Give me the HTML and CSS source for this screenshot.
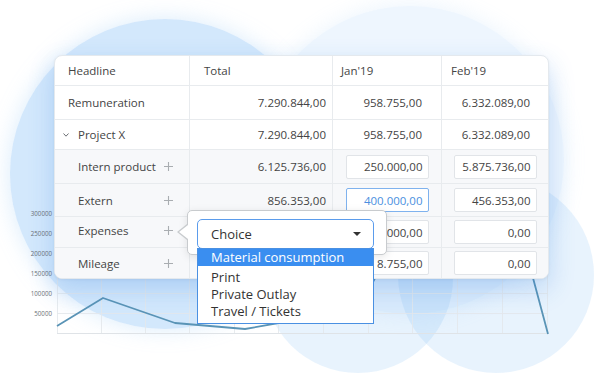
FILE: index.html
```html
<!DOCTYPE html>
<html lang="en">
<head>
  <meta charset="UTF-8">
  <meta name="viewport" content="width=device-width, initial-scale=1.0">
  <title>Budget Sheet</title>
  <link rel="stylesheet" href="styles.css">
</head>
<body>
  <div class="stage">
    <div class="blob blob-a"></div>
    <div class="blob blob-b"></div>
    <div class="blob blob-c"></div>
    <div class="blob blob-d"></div>

    <svg class="chart" width="600" height="140" viewBox="0 200 600 140">
      <g class="grid">
        <line x1="57" y1="213.5" x2="548" y2="213.5"/>
        <line x1="57" y1="233.5" x2="548" y2="233.5"/>
        <line x1="57" y1="253.5" x2="548" y2="253.5"/>
        <line x1="57" y1="273.5" x2="548" y2="273.5"/>
        <line x1="57" y1="293.5" x2="548" y2="293.5"/>
        <line x1="57" y1="313.5" x2="548" y2="313.5"/>
        <line x1="57.5" y1="213" x2="57.5" y2="334"/>
        <line x1="101.5" y1="213" x2="101.5" y2="334"/>
        <line x1="145.5" y1="213" x2="145.5" y2="334"/>
        <line x1="189.5" y1="213" x2="189.5" y2="334"/>
        <line x1="234.5" y1="213" x2="234.5" y2="334"/>
        <line x1="278.5" y1="213" x2="278.5" y2="334"/>
        <line x1="323.5" y1="213" x2="323.5" y2="334"/>
        <line x1="368.5" y1="213" x2="368.5" y2="334"/>
        <line x1="412.5" y1="213" x2="412.5" y2="334"/>
        <line x1="457.5" y1="213" x2="457.5" y2="334"/>
        <line x1="502.5" y1="213" x2="502.5" y2="334"/>
        <line x1="547.5" y1="213" x2="547.5" y2="334"/>
      </g>
      <line class="axis" x1="57" y1="333.5" x2="548" y2="333.5"/>
      <g class="ticks">
        <text x="52" y="215.5">300000</text>
        <text x="52" y="235.5">250000</text>
        <text x="52" y="255.5">200000</text>
        <text x="52" y="275.5">150000</text>
        <text x="52" y="295.5">100000</text>
        <text x="52" y="315.5">50000</text>
      </g>
      <polyline class="trend" points="57,326 103,298 175,323 245,329 290,321 373,282 400,230 510,192 548,334"/>
    </svg>

    <div class="sheet">
      <div class="row head">
        <div class="cell label">Headline</div>
        <div class="cell">Total</div>
        <div class="cell">Jan'19</div>
        <div class="cell">Feb'19</div>
      </div>
      <div class="row tall">
        <div class="cell label">Remuneration</div>
        <div class="cell num total">7.290.844,00</div>
        <div class="cell num jan">958.755,00</div>
        <div class="cell num feb">6.332.089,00</div>
      </div>
      <div class="row">
        <div class="cell label group">
          <svg class="chevron" width="6" height="4" viewBox="0 0 6 4"><polyline points="0.5,0.5 3,3.2 5.5,0.5"/></svg>
          Project X
        </div>
        <div class="cell num total">7.290.844,00</div>
        <div class="cell num jan">958.755,00</div>
        <div class="cell num feb">6.332.089,00</div>
      </div>
      <div class="row sub tall">
        <div class="cell label indent">Intern product <svg class="plus" width="9" height="9" viewBox="0 0 9 9"><path d="M4.5 0v9M0 4.5h9"/></svg></div>
        <div class="cell num total">6.125.736,00</div>
        <div class="cell edit"><input class="field" value="250.000,00"></div>
        <div class="cell edit"><input class="field" value="5.875.736,00"></div>
      </div>
      <div class="row sub mid">
        <div class="cell label indent">Extern <svg class="plus" width="9" height="9" viewBox="0 0 9 9"><path d="M4.5 0v9M0 4.5h9"/></svg></div>
        <div class="cell num total">856.353,00</div>
        <div class="cell edit"><input class="field active" value="400.000,00"></div>
        <div class="cell edit"><input class="field" value="456.353,00"></div>
      </div>
      <div class="row sub short">
        <div class="cell label indent">Expenses <svg class="plus" width="9" height="9" viewBox="0 0 9 9"><path d="M4.5 0v9M0 4.5h9"/></svg></div>
        <div class="cell num total">308.755,00</div>
        <div class="cell edit"><input class="field" value="300.000,00"></div>
        <div class="cell edit"><input class="field" value="0,00"></div>
      </div>
      <div class="row sub last">
        <div class="cell label indent">Mileage <svg class="plus" width="9" height="9" viewBox="0 0 9 9"><path d="M4.5 0v9M0 4.5h9"/></svg></div>
        <div class="cell num total"></div>
        <div class="cell edit"><input class="field" value="8.755,00"></div>
        <div class="cell edit"><input class="field" value="0,00"></div>
      </div>
    </div>

    <div class="popover">
      <div class="select">
        <span>Choice</span>
        <span class="caret"></span>
        <ul class="options">
          <li class="on">Material consumption</li>
          <li>Print</li>
          <li>Private Outlay</li>
          <li>Travel / Tickets</li>
        </ul>
      </div>
    </div>
  </div>
</body>
</html>
```

FILE: styles.css
```css
body {
  margin: 0;
  background: #ffffff;
  font-family: "Open Sans", "Noto Sans", sans-serif;
}
.stage {
  position: relative;
  width: 600px;
  height: 383px;
  overflow: hidden;
  box-sizing: border-box;
  padding: 55px 0 0 54px;
}

/* background bubbles */
.blob {
  position: absolute;
  border-radius: 50%;
}
.blob-a {
  left: 10px;
  top: 19px;
  width: 310px;
  height: 310px;
  background: rgba(120, 185, 245, 0.33);
  box-shadow: 0 0 22px rgba(150, 200, 245, 0.35);
}
.blob-b {
  left: 256px;
  top: 6px;
  width: 308px;
  height: 308px;
  background: rgba(120, 185, 245, 0.13);
  box-shadow: 0 0 22px rgba(150, 200, 245, 0.2);
}
.blob-c {
  left: 263px;
  top: 183px;
  width: 190px;
  height: 190px;
  background: rgba(120, 185, 245, 0.17);
}
.blob-d {
  left: 398px;
  top: 177px;
  width: 196px;
  height: 196px;
  background: rgba(120, 185, 245, 0.17);
}

/* chart under the sheet */
.chart {
  position: absolute;
  left: 0;
  top: 200px;
}
.grid line {
  stroke: #e4e8ec;
  stroke-width: 1;
  opacity: 0.85;
}
.axis {
  stroke: #dfe3e7;
  stroke-width: 1;
}
.ticks text {
  font-family: "Open Sans", sans-serif;
  font-size: 6.2px;
  fill: #6c7176;
  text-anchor: end;
}
.trend {
  fill: none;
  stroke: #5a94b6;
  stroke-width: 1.8;
  stroke-linejoin: round;
}

/* sheet */
.sheet {
  position: relative;
  width: 493px;
  background: #ffffff;
  border: 1px solid #e4e9ee;
  border-radius: 8px;
  overflow: hidden;
  box-shadow: 0 10px 26px rgba(40, 120, 220, 0.24), 0 1px 3px rgba(0, 0, 0, 0.05);
  font-size: 11.5px;
  color: #444;
}
.row {
  display: grid;
  grid-template-columns: 135px 143px 109px 106px;
  height: 33px;
  box-sizing: border-box;
  border-bottom: 1px solid #e8ebee;
}
.row.head { height: 30px; }
.row.tall { height: 34px; }
.row.mid { height: 33px; }
.row.short { height: 31px; }
.row.last { height: 30px; border-bottom: none; }
.row:nth-child(3) { height: 30px; }
.row.sub { background: #f7f8fa; }

.cell {
  display: flex;
  align-items: center;
  box-sizing: border-box;
  border-right: 1px solid #e8ebee;
  white-space: nowrap;
}
.cell:last-child { border-right: none; }

.head .cell:nth-child(2) { padding-left: 14px; }
.head .cell:nth-child(3) { padding-left: 8px; }
.head .cell:nth-child(4) { padding-left: 9px; }

.label { padding-left: 13px; }
.label.group { padding-left: 8px; gap: 9px; }
.label.indent {
  padding-left: 23px;
  padding-right: 16px;
  justify-content: space-between;
}
.short .label { padding-bottom: 3px; }
.chevron polyline {
  fill: none;
  stroke: #6b6f73;
  stroke-width: 1;
}
.plus path {
  stroke: #a9adb1;
  stroke-width: 1.1;
}

.num { justify-content: flex-end; }
.total { padding-right: 6px; }
.jan { padding-right: 19px; }
.feb { padding-right: 18px; }

.edit { justify-content: center; }
.field {
  width: 83px;
  height: 24px;
  box-sizing: border-box;
  border: 1px solid #e1e4e8;
  border-radius: 2px;
  background: #ffffff;
  padding: 0 5px;
  font: inherit;
  color: inherit;
  text-align: right;
  outline: none;
}
.field.active {
  border-color: #7fb2ee;
  color: #4a8fe0;
}

/* choice popover */
.popover {
  position: absolute;
  left: 187px;
  top: 210px;
  width: 200px;
  height: 45px;
  box-sizing: border-box;
  padding: 8px 0 0 9px;
  background: #ffffff;
  border: 1px solid #c8cbce;
  border-radius: 5px;
  box-shadow: 0 2px 8px rgba(0, 0, 0, 0.1);
}
.popover::before,
.popover::after {
  content: "";
  position: absolute;
  width: 0;
  height: 0;
  border-style: solid;
  border-color: transparent;
}
.popover::before {
  left: -11px;
  top: 13px;
  border-width: 8px 10px 8px 0;
  border-right-color: #c8cbce;
}
.popover::after {
  left: -9px;
  top: 14px;
  border-width: 7px 9px 7px 0;
  border-right-color: #ffffff;
}
.select {
  position: relative;
  width: 177px;
  height: 30px;
  box-sizing: border-box;
  display: flex;
  align-items: center;
  justify-content: space-between;
  padding: 0 12px 0 13px;
  border: 1px solid #5b9cec;
  border-radius: 5px;
  font-size: 13px;
  color: #333;
}
.caret {
  width: 0;
  height: 0;
  border-left: 4px solid transparent;
  border-right: 4px solid transparent;
  border-top: 4px solid #333;
}
.options {
  position: absolute;
  left: -1px;
  top: 28px;
  width: 177px;
  box-sizing: border-box;
  margin: 0;
  padding: 0 0 3px;
  list-style: none;
  background: #ffffff;
  border: 1px solid #4a90e2;
  font-size: 13px;
  line-height: 17px;
  color: #333;
}
.options li {
  height: 17px;
  padding-left: 13px;
}
.options li.on {
  background: #3a8ef0;
  color: #ffffff;
  margin-bottom: 3px;
}
```
